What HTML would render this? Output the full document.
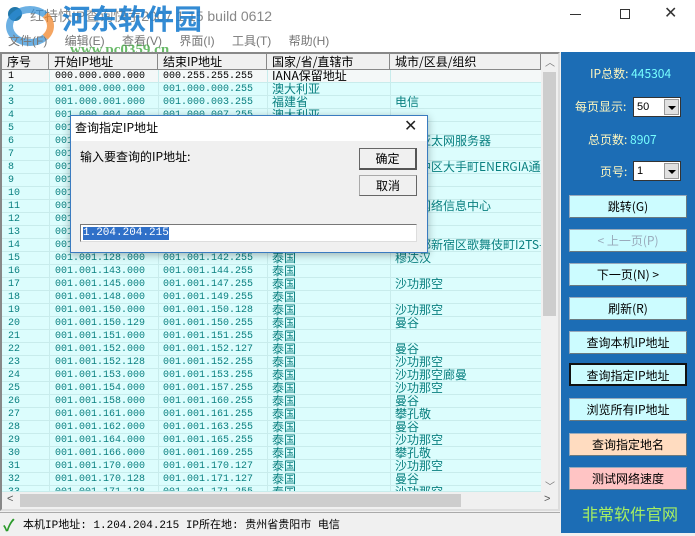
<!DOCTYPE html>
<html><head><meta charset="utf-8"><style>
*{margin:0;padding:0;box-sizing:border-box}
body{width:695px;height:533px;overflow:hidden;background:#f0f0f0;position:relative;font-family:"Liberation Sans","Noto Sans CJK SC",sans-serif;font-size:12px}
.a{position:absolute}
.mono{font-family:"Liberation Mono","Noto Sans CJK SC",monospace;font-size:10px}
.row{position:absolute;left:2px;width:539px;height:13px;background:#dcfdfd;border-bottom:1px solid #c8ecec;color:#0a8080;line-height:13px}
.row span{position:absolute;top:0;white-space:nowrap}
.c0{left:6px}.c1{left:53px}.c2{left:161px}.c3{left:270px;font-family:"Noto Sans CJK SC",sans-serif;font-size:12px;line-height:12px}.c4{left:393px;font-family:"Noto Sans CJK SC",sans-serif;font-size:12px;line-height:12px}
.hd{position:absolute;top:54px;height:16px;background:#f0f0f0;border-right:1px solid #888;border-bottom:1px solid #888;font-size:12px;line-height:15px;padding-left:5px;font-family:"Noto Sans CJK SC",sans-serif;color:#000}
.btn{position:absolute;left:569px;width:118px;height:23px;background:#ccfcff;border:1px solid #9ab;border-right-color:#6a7a80;border-bottom-color:#6a7a80;text-align:center;line-height:21px;font-size:12px;font-family:"Noto Sans CJK SC",sans-serif;color:#000}
.lbl{position:absolute;color:#fff7c0;font-size:12px;font-family:"Noto Sans CJK SC",sans-serif}
.lbl b{font-weight:normal;color:#7ff}
.sel{position:absolute;left:633px;width:48px;height:20px;background:#fff;border:1px solid #333;font-size:11px;line-height:18px;padding-left:3px;color:#000}
.sel i{position:absolute;right:1px;top:1px;width:15px;height:16px;background:#e0e0e0;border:1px solid #999}
.sel i:after{content:"";position:absolute;left:3px;top:6px;border-left:4px solid transparent;border-right:4px solid transparent;border-top:4px solid #000}
</style></head><body>
<!-- title bar -->
<div class="a" style="left:0;top:0;width:695px;height:52px;background:#fff"></div>
<div class="a" style="left:8px;top:7px;width:14px;height:14px;border-radius:50%;background:#27a;"></div>
<div class="a" style="left:30px;top:6px;color:#888;font-size:14px;">红特快IP查询快手2007 1.15 build 0612</div>
<div class="a" style="left:62px;top:-2px;color:#1d7fd0;font-size:28px;font-weight:bold;opacity:.9;font-family:'Noto Sans CJK SC',sans-serif">河东软件园</div>
<div class="a" style="left:6px;top:6px;width:48px;height:40px;border-radius:50%;border:7px solid #2f8fd8;opacity:.7;border-right-color:#f08020"></div>
<div class="a" style="left:8px;top:32px;color:#777;font-size:12px;word-spacing:14px">文件(F) 编辑(E) 查看(V) 界面(I) 工具(T) 帮助(H)</div>
<div class="a" style="left:70px;top:42px;color:#4a4;font-size:15px;font-weight:bold;opacity:.8;font-family:'Liberation Serif',serif">www.pc0359.cn</div>
<div class="a" style="left:570px;top:14px;width:11px;height:1px;background:#333"></div>
<div class="a" style="left:620px;top:9px;width:10px;height:10px;border:1px solid #333"></div>
<div class="a" style="left:664px;top:3px;font-size:16px;color:#333">✕</div>

<!-- table frame -->
<div class="a" style="left:0;top:52px;width:560px;height:459px;border:2px solid #888;border-right-color:#ddd;border-bottom-color:#ddd;background:#dcfdfd"></div>
<div class="hd" style="left:2px;width:47px">序号</div>
<div class="hd" style="left:49px;width:109px">开始IP地址</div>
<div class="hd" style="left:158px;width:109px">结束IP地址</div>
<div class="hd" style="left:267px;width:123px">国家/省/直辖市</div>
<div class="hd" style="left:390px;width:151px">城市/区县/组织</div>
<div class="mono">
<div class="row" style="top:70px;background:#f4f8f8;color:#000"><span class="c0">1</span><span class="c1">000.000.000.000</span><span class="c2">000.255.255.255</span><span class="c3">IANA保留地址</span></div>
<div class="row" style="top:83px"><span class="c0">2</span><span class="c1">001.000.000.000</span><span class="c2">001.000.000.255</span><span class="c3">澳大利亚</span></div>
<div class="row" style="top:96px"><span class="c0">3</span><span class="c1">001.000.001.000</span><span class="c2">001.000.003.255</span><span class="c3">福建省</span><span class="c4">电信</span></div>
<div class="row" style="top:109px"><span class="c0">4</span><span class="c1">001.000.004.000</span><span class="c2">001.000.007.255</span><span class="c3">澳大利亚</span></div>
<div class="row" style="top:122px"><span class="c0">5</span><span class="c1">001.000.008.000</span></div>
<div class="row" style="top:135px"><span class="c0">6</span><span class="c1">001.000.016.000</span><span class="c4">日本亚太网服务器</span></div>
<div class="row" style="top:148px"><span class="c0">7</span><span class="c1">001.000.032.000</span></div>
<div class="row" style="top:161px"><span class="c0">8</span><span class="c1">001.000.064.000</span><span class="c4">广岛中区大手町ENERGIA通</span></div>
<div class="row" style="top:174px"><span class="c0">9</span><span class="c1">001.000.128.000</span></div>
<div class="row" style="top:187px"><span class="c0">10</span><span class="c1">001.000.128.000</span></div>
<div class="row" style="top:200px"><span class="c0">11</span><span class="c1">001.000.128.000</span><span class="c4">互联网络信息中心</span></div>
<div class="row" style="top:213px"><span class="c0">12</span><span class="c1">001.001.000.000</span></div>
<div class="row" style="top:226px"><span class="c0">13</span><span class="c1">001.001.064.000</span></div>
<div class="row" style="top:239px"><span class="c0">14</span><span class="c1">001.001.127.000</span><span class="c4">东京都新宿区歌舞伎町I2TS-</span></div>
<div class="row" style="top:252px"><span class="c0">15</span><span class="c1">001.001.128.000</span><span class="c2">001.001.142.255</span><span class="c3">泰国</span><span class="c4">穆达汉</span></div>
<div class="row" style="top:265px"><span class="c0">16</span><span class="c1">001.001.143.000</span><span class="c2">001.001.144.255</span><span class="c3">泰国</span></div>
<div class="row" style="top:278px"><span class="c0">17</span><span class="c1">001.001.145.000</span><span class="c2">001.001.147.255</span><span class="c3">泰国</span><span class="c4">沙功那空</span></div>
<div class="row" style="top:291px"><span class="c0">18</span><span class="c1">001.001.148.000</span><span class="c2">001.001.149.255</span><span class="c3">泰国</span></div>
<div class="row" style="top:304px"><span class="c0">19</span><span class="c1">001.001.150.000</span><span class="c2">001.001.150.128</span><span class="c3">泰国</span><span class="c4">沙功那空</span></div>
<div class="row" style="top:317px"><span class="c0">20</span><span class="c1">001.001.150.129</span><span class="c2">001.001.150.255</span><span class="c3">泰国</span><span class="c4">曼谷</span></div>
<div class="row" style="top:330px"><span class="c0">21</span><span class="c1">001.001.151.000</span><span class="c2">001.001.151.255</span><span class="c3">泰国</span></div>
<div class="row" style="top:343px"><span class="c0">22</span><span class="c1">001.001.152.000</span><span class="c2">001.001.152.127</span><span class="c3">泰国</span><span class="c4">曼谷</span></div>
<div class="row" style="top:356px"><span class="c0">23</span><span class="c1">001.001.152.128</span><span class="c2">001.001.152.255</span><span class="c3">泰国</span><span class="c4">沙功那空</span></div>
<div class="row" style="top:369px"><span class="c0">24</span><span class="c1">001.001.153.000</span><span class="c2">001.001.153.255</span><span class="c3">泰国</span><span class="c4">沙功那空廊曼</span></div>
<div class="row" style="top:382px"><span class="c0">25</span><span class="c1">001.001.154.000</span><span class="c2">001.001.157.255</span><span class="c3">泰国</span><span class="c4">沙功那空</span></div>
<div class="row" style="top:395px"><span class="c0">26</span><span class="c1">001.001.158.000</span><span class="c2">001.001.160.255</span><span class="c3">泰国</span><span class="c4">曼谷</span></div>
<div class="row" style="top:408px"><span class="c0">27</span><span class="c1">001.001.161.000</span><span class="c2">001.001.161.255</span><span class="c3">泰国</span><span class="c4">攀孔敬</span></div>
<div class="row" style="top:421px"><span class="c0">28</span><span class="c1">001.001.162.000</span><span class="c2">001.001.163.255</span><span class="c3">泰国</span><span class="c4">曼谷</span></div>
<div class="row" style="top:434px"><span class="c0">29</span><span class="c1">001.001.164.000</span><span class="c2">001.001.165.255</span><span class="c3">泰国</span><span class="c4">沙功那空</span></div>
<div class="row" style="top:447px"><span class="c0">30</span><span class="c1">001.001.166.000</span><span class="c2">001.001.169.255</span><span class="c3">泰国</span><span class="c4">攀孔敬</span></div>
<div class="row" style="top:460px"><span class="c0">31</span><span class="c1">001.001.170.000</span><span class="c2">001.001.170.127</span><span class="c3">泰国</span><span class="c4">沙功那空</span></div>
<div class="row" style="top:473px"><span class="c0">32</span><span class="c1">001.001.170.128</span><span class="c2">001.001.171.127</span><span class="c3">泰国</span><span class="c4">曼谷</span></div>
<div class="row" style="top:486px;height:6px;overflow:hidden"><span class="c0">33</span><span class="c1">001.001.171.128</span><span class="c2">001.001.171.255</span><span class="c3">泰国</span><span class="c4">沙功那空</span></div>
</div>
<!-- column lines -->
<div class="a" style="left:49px;top:70px;width:1px;height:422px;background:#c8ecec"></div>
<div class="a" style="left:158px;top:70px;width:1px;height:422px;background:#c8ecec"></div>
<div class="a" style="left:267px;top:70px;width:1px;height:422px;background:#c8ecec"></div>
<div class="a" style="left:390px;top:70px;width:1px;height:422px;background:#c8ecec"></div>
<!-- vscroll -->
<div class="a" style="left:541px;top:54px;width:17px;height:438px;background:#f0f0f0"></div>
<div class="a" style="left:543px;top:72px;width:13px;height:244px;background:#cdcdcd"></div>
<div class="a" style="left:545px;top:54px;font-size:10px;color:#777">︿</div>
<div class="a" style="left:545px;top:478px;font-size:10px;color:#777">﹀</div>
<!-- hscroll -->
<div class="a" style="left:2px;top:492px;width:556px;height:17px;background:#f0f0f0"></div>
<div class="a" style="left:20px;top:494px;width:441px;height:13px;background:#cdcdcd"></div>
<div class="a" style="left:7px;top:493px;font-size:11px;color:#555">&lt;</div>
<div class="a" style="left:544px;top:493px;font-size:11px;color:#555">&gt;</div>
<!-- status -->
<div class="a" style="left:0;top:512px;width:560px;height:21px;border-top:1px solid #aaa;background:#f0f0f0"></div>
<div class="a" style="left:3px;top:512px;color:#2a9a2a;font-size:16px;font-weight:bold">✓</div>
<div class="a mono" style="left:23px;top:516px;font-size:11px;color:#000;white-space:nowrap">本机IP地址: 1.204.204.215  IP所在地: 贵州省贵阳市 电信</div>

<!-- right panel -->
<div class="a" style="left:561px;top:52px;width:134px;height:481px;background:#1c6db5"></div>
<div class="lbl" style="left:590px;top:65px">IP总数: <b>445304</b></div>
<div class="lbl" style="left:575px;top:98px">每页显示:</div>
<div class="sel" style="top:97px">50<i></i></div>
<div class="lbl" style="left:588px;top:131px">总页数: <b>8907</b></div>
<div class="lbl" style="left:600px;top:163px">页号:</div>
<div class="sel" style="top:161px">1<i></i></div>
<div class="btn" style="top:195px">跳转(G)</div>
<div class="btn" style="top:229px;color:#9ab">&lt; 上一页(P)</div>
<div class="btn" style="top:263px">下一页(N) &gt;</div>
<div class="btn" style="top:297px">刷新(R)</div>
<div class="btn" style="top:331px">查询本机IP地址</div>
<div class="btn" style="top:363px;border:2px solid #111">查询指定IP地址</div>
<div class="btn" style="top:398px">浏览所有IP地址</div>
<div class="btn" style="top:433px;background:#ffdcc0">查询指定地名</div>
<div class="btn" style="top:467px;background:#ffc4c4">测试网络速度</div>
<div class="a" style="left:582px;top:501px;color:#a8f060;font-size:16px;font-family:'Noto Sans CJK SC',sans-serif">非常软件官网</div>

<!-- dialog -->
<div class="a" style="left:70px;top:115px;width:358px;height:138px;background:#f0f0f0;border:1px solid #3a7bc0;box-shadow:0 2px 8px rgba(0,0,0,.3)"></div>
<div class="a" style="left:71px;top:116px;width:356px;height:25px;background:#fff"></div>
<div class="a" style="left:75px;top:119px;font-size:12px;font-family:'Noto Sans CJK SC',sans-serif">查询指定IP地址</div>
<div class="a" style="left:404px;top:116px;font-size:16px;color:#222">✕</div>
<div class="a" style="left:80px;top:148px;font-size:12px;font-family:'Noto Sans CJK SC',sans-serif">输入要查询的IP地址:</div>
<div class="a" style="left:359px;top:148px;width:58px;height:22px;border:1px solid #666;border-right:2px solid #555;border-bottom:2px solid #555;background:#f0f0f0;text-align:center;line-height:19px;font-family:'Noto Sans CJK SC',sans-serif">确定</div>
<div class="a" style="left:359px;top:175px;width:58px;height:21px;border:1px solid #aaa;border-right-color:#666;border-bottom-color:#666;background:#f0f0f0;text-align:center;line-height:19px;font-family:'Noto Sans CJK SC',sans-serif">取消</div>
<div class="a" style="left:80px;top:224px;width:337px;height:18px;background:#fff;border:1px solid #777;border-right-color:#ddd;border-bottom-color:#ddd"></div>
<div class="a mono" style="left:83px;top:227px;font-size:11px;background:#3070c8;color:#fff;line-height:13px">1.204.204.215</div>
</body></html>
